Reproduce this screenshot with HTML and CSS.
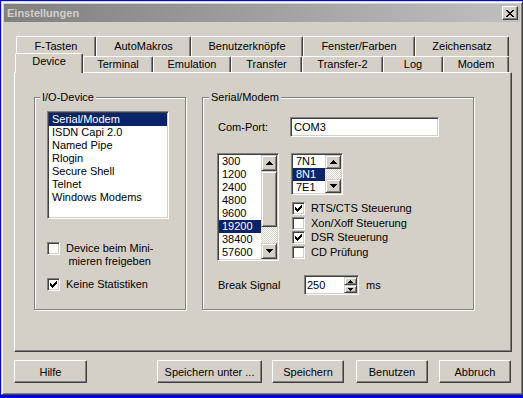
FILE: index.html
```html
<!DOCTYPE html>
<html lang="de">
<head>
  <meta charset="UTF-8">
  <title>Einstellungen</title>
  <link rel="stylesheet" href="styles.css">
</head>
<body>
  <div class="window">
    <div class="titlebar">
      <span class="title">Einstellungen</span>
      <span class="close">
        <svg width="8" height="7" viewBox="0 0 8 7"><path d="M0 0h2v1h-2zM6 0h2v1h-2zM1 1h2v1h-2zM5 1h2v1h-2zM2 2h4v1h-4zM3 3h2v1h-2zM2 4h4v1h-4zM1 5h2v1h-2zM5 5h2v1h-2zM0 6h2v1h-2zM6 6h2v1h-2z"/></svg>
      </span>
    </div>

    <div class="client">
      <div class="tabrow back">
        <div class="tab t-ftasten">F-Tasten</div>
        <div class="tab t-makros">AutoMakros</div>
        <div class="tab t-knoepfe">Benutzerknöpfe</div>
        <div class="tab t-fenster">Fenster/Farben</div>
        <div class="tab t-zeichen">Zeichensatz</div>
      </div>
      <div class="tabrow front">
        <div class="tab t-device active">Device</div>
        <div class="tab t-terminal">Terminal</div>
        <div class="tab t-emulation">Emulation</div>
        <div class="tab t-transfer">Transfer</div>
        <div class="tab t-transfer2">Transfer-2</div>
        <div class="tab t-log">Log</div>
        <div class="tab t-modem">Modem</div>
      </div>

      <div class="panel">
        <fieldset class="group io">
          <legend>I/O-Device</legend>
          <div class="list io-list">
            <ul class="items">
              <li class="sel">Serial/Modem</li>
              <li>ISDN Capi 2.0</li>
              <li>Named Pipe</li>
              <li>Rlogin</li>
              <li>Secure Shell</li>
              <li>Telnet</li>
              <li>Windows Modems</li>
            </ul>
          </div>
          <div class="check-row first">
            <span class="box"></span>
            <span class="check-text center">Device beim Mini-<br>mieren freigeben</span>
          </div>
          <div class="check-row second">
            <span class="box on"><svg width="7" height="7" viewBox="0 0 7 7"><path d="M6 0h1v1h-1zM5 1h2v1h-2zM0 2h1v1h-1zM4 2h3v1h-3zM0 3h2v1h-2zM3 3h3v1h-3zM0 4h5v1h-5zM1 5h3v1h-3zM2 6h1v1h-1z"/></svg></span>
            <span class="check-text">Keine Statistiken</span>
          </div>
        </fieldset>

        <fieldset class="group serial">
          <legend>Serial/Modem</legend>
          <div class="com-row">
            <span class="com-label">Com-Port:</span>
            <div class="edit com-edit">COM3</div>
          </div>

          <div class="lists-row">
            <div class="list baud-list">
              <ul class="items">
                <li>300</li>
                <li>1200</li>
                <li>2400</li>
                <li>4800</li>
                <li>9600</li>
                <li class="sel">19200</li>
                <li>38400</li>
                <li>57600</li>
              </ul>
              <div class="scrollbar">
                <span class="sbtn"><svg width="7" height="4" viewBox="0 0 7 4"><path d="M3 0h1v1h1v1h1v1h1v1H0V3h1V2h1V1h1z"/></svg></span>
                <span class="thumb"></span>
                <span class="track"></span>
                <span class="sbtn"><svg width="7" height="4" viewBox="0 0 7 4"><path d="M0 0h7v1H6v1H5v1H4v1H3V3H2V2H1V1H0z"/></svg></span>
              </div>
            </div>

            <div class="parity-col">
              <div class="list parity-list">
                <ul class="items">
                  <li>7N1</li>
                  <li class="sel">8N1</li>
                  <li>7E1</li>
                </ul>
                <div class="scrollbar">
                  <span class="sbtn small"><svg width="7" height="4" viewBox="0 0 7 4"><path d="M3 0h1v1h1v1h1v1h1v1H0V3h1V2h1V1h1z"/></svg></span>
                  <span class="track"></span>
                  <span class="sbtn small"><svg width="7" height="4" viewBox="0 0 7 4"><path d="M0 0h7v1H6v1H5v1H4v1H3V3H2V2H1V1H0z"/></svg></span>
                </div>
              </div>

              <div class="opts">
                <div class="check-row">
                  <span class="box on"><svg width="7" height="7" viewBox="0 0 7 7"><path d="M6 0h1v1h-1zM5 1h2v1h-2zM0 2h1v1h-1zM4 2h3v1h-3zM0 3h2v1h-2zM3 3h3v1h-3zM0 4h5v1h-5zM1 5h3v1h-3zM2 6h1v1h-1z"/></svg></span>
                  <span class="check-text">RTS/CTS Steuerung</span>
                </div>
                <div class="check-row">
                  <span class="box"></span>
                  <span class="check-text">Xon/Xoff Steuerung</span>
                </div>
                <div class="check-row">
                  <span class="box on"><svg width="7" height="7" viewBox="0 0 7 7"><path d="M6 0h1v1h-1zM5 1h2v1h-2zM0 2h1v1h-1zM4 2h3v1h-3zM0 3h2v1h-2zM3 3h3v1h-3zM0 4h5v1h-5zM1 5h3v1h-3zM2 6h1v1h-1z"/></svg></span>
                  <span class="check-text">DSR Steuerung</span>
                </div>
                <div class="check-row">
                  <span class="box"></span>
                  <span class="check-text">CD Prüfung</span>
                </div>
              </div>
            </div>
          </div>

          <div class="break-row">
            <span class="break-label">Break Signal</span>
            <div class="spin">
              <span class="spin-val">250</span>
              <span class="spin-btns">
                <span class="spin-btn"><svg width="5" height="3" viewBox="0 0 5 3"><path d="M2 0h1v1h1v1h1v1H0V2h1V1h1z"/></svg></span>
                <span class="spin-btn"><svg width="5" height="3" viewBox="0 0 5 3"><path d="M0 0h5v1H4v1H3v1H2V2H1V1H0z"/></svg></span>
              </span>
            </div>
            <span class="unit">ms</span>
          </div>
        </fieldset>
      </div>

      <div class="buttons">
        <button class="btn b-hilfe">Hilfe</button>
        <button class="btn b-unter">Speichern unter ...</button>
        <button class="btn b-save">Speichern</button>
        <button class="btn b-use">Benutzen</button>
        <button class="btn b-cancel">Abbruch</button>
      </div>
    </div>
  </div>
</body>
</html>
```

FILE: styles.css
```css
* {
  box-sizing: border-box;
}
body {
  margin: 0;
  padding: 1px 0 0 1px;
  background: #0000ee;
  font-family: "Liberation Sans", Arial, sans-serif;
  font-size: 11px;
  color: #000;
  overflow: hidden;
}
.window {
  width: 522px;
  height: 394px;
  padding: 2px;
  background: #d4d0c8;
  border: 1px solid;
  border-color: #d4d0c8 #404040 #404040 #d4d0c8;
  box-shadow: inset 1px 1px #fff, inset -1px -1px #808080;
}

/* title bar (inactive) */
.titlebar {
  height: 18px;
  display: flex;
  align-items: center;
  justify-content: space-between;
  padding: 0 2px 0 3px;
  background: linear-gradient(to right, #808080, #c0c0c0);
}
.title {
  font-weight: bold;
  color: #d4d0c8;
}
.close {
  width: 16px;
  height: 14px;
  display: flex;
  align-items: center;
  justify-content: center;
  background: #d4d0c8;
  border: 1px solid;
  border-color: #fff #404040 #404040 #fff;
  box-shadow: inset -1px -1px #808080;
}
.close svg {
  display: block;
}

.client {
  padding: 14px 8px 0 10px;
}

/* tabs */
.tabrow {
  display: flex;
}
.back {
  height: 20px;
  padding-left: 2px;
}
.front {
  height: 19px;
  margin-top: -3px;
  padding-left: 1px;
  align-items: flex-end;
}
.tab {
  position: relative;
  height: 100%;
  line-height: 13px;
  padding-top: 3px;
  text-align: center;
  white-space: nowrap;
  background: #d4d0c8;
  border: 1px solid;
  border-bottom: 0;
  border-color: #fff #404040 #404040 #fff;
  border-radius: 2px 2px 0 0;
  box-shadow: inset -1px 0 #808080;
}
.front .tab {
  height: 16px;
  padding-top: 1px;
}
.front .tab.active {
  height: 20px;
  margin-bottom: -1px;
  padding-top: 1px;
  z-index: 2;
}
.t-ftasten { width: 80px; }
.t-makros { width: 95px; }
.t-knoepfe { width: 112px; }
.t-fenster { width: 112px; }
.t-zeichen { width: 94px; }
.t-device { width: 68px; }
.t-terminal { width: 70px; }
.t-emulation { width: 78px; }
.t-transfer { width: 71px; }
.t-transfer2 { width: 81px; }
.t-log { width: 60px; }
.t-modem { width: 66px; }

/* tab page */
.panel {
  position: relative;
  z-index: 1;
  width: 498px;
  height: 280px;
  display: flex;
  align-items: flex-start;
  padding: 18px 0 0 19px;
  border: 1px solid;
  border-color: #fff #404040 #404040 #fff;
  box-shadow: inset -1px -1px #808080;
}
.group {
  margin: 0;
  min-width: 0;
  height: 219px;
  border: 1px solid #808080;
  box-shadow: inset 1px 1px #fff, 1px 1px #fff;
}
.group legend {
  padding: 0 2px;
  line-height: 13px;
  background: #d4d0c8;
}
.io {
  width: 152px;
  padding: 7px 0 0 5px;
}
.serial {
  width: 272px;
  margin-left: 16px;
  padding: 13px 0 0 6px;
}

/* sunken controls */
.list,
.edit,
.spin {
  background: #fff;
  border: 1px solid;
  border-color: #808080 #fff #fff #808080;
  box-shadow: inset 1px 1px #404040, inset -1px -1px #d4d0c8;
  padding: 1px;
}
.list {
  display: flex;
}
.items {
  flex: 1;
  margin: 0;
  padding: 0;
  list-style: none;
}
.items li {
  height: 13px;
  line-height: 13px;
  padding-left: 3px;
  white-space: nowrap;
}
.items li.sel {
  background: #0a246a;
  color: #fff;
}
.io-list {
  width: 122px;
  height: 108px;
  margin-left: 7px;
}

.scrollbar {
  width: 16px;
  display: flex;
  flex-direction: column;
}
.sbtn,
.thumb,
.spin-btn {
  display: flex;
  align-items: center;
  justify-content: center;
  background: #d4d0c8;
  border: 1px solid;
  border-color: #d4d0c8 #404040 #404040 #d4d0c8;
  box-shadow: inset 1px 1px #fff, inset -1px -1px #808080;
}
.sbtn {
  height: 16px;
  flex: none;
}
.sbtn.small {
  height: 14px;
}
.thumb {
  height: 56px;
  flex: none;
}
.track {
  flex: 1;
  background: repeating-conic-gradient(#fff 0 25%, #d4d0c8 0 50%) 0 0 / 2px 2px;
}
.sbtn svg,
.spin-btn svg {
  display: block;
}

/* checkboxes */
.check-row {
  display: flex;
  align-items: flex-start;
}
.box {
  width: 13px;
  height: 13px;
  flex: none;
  background: #fff;
  border: 1px solid;
  border-color: #808080 #fff #fff #808080;
  box-shadow: inset 1px 1px #404040, inset -1px -1px #d4d0c8;
  padding: 2px;
}
.box svg {
  display: block;
}
.check-text {
  margin-left: 6px;
  line-height: 13px;
  white-space: nowrap;
}
.check-text.center {
  text-align: center;
}
.io .check-row {
  margin-left: 7px;
}
.io .first {
  margin-top: 23px;
}
.io .second {
  margin-top: 10px;
}

/* serial / modem */
.com-row {
  display: flex;
  align-items: center;
  margin-left: 9px;
}
.com-label {
  width: 72px;
}
.edit {
  height: 20px;
  line-height: 16px;
  padding-left: 3px;
}
.com-edit {
  width: 149px;
}
.lists-row {
  display: flex;
  align-items: flex-start;
  margin: 16px 0 0 8px;
}
.baud-list {
  width: 62px;
  height: 108px;
}
.parity-col {
  margin-left: 12px;
}
.parity-list {
  width: 52px;
  height: 42px;
}
.opts {
  margin: 7px 0 0 1px;
}
.opts .check-row {
  height: 14.5px;
}
.break-row {
  display: flex;
  align-items: center;
  margin: 14px 0 0 9px;
}
.break-label {
  width: 86px;
}
.spin {
  width: 55px;
  height: 20px;
  display: flex;
}
.spin-val {
  flex: 1;
  line-height: 16px;
  padding-left: 1px;
}
.spin-btns {
  width: 13px;
  display: flex;
  flex-direction: column;
}
.spin-btn {
  flex: 1;
}
.unit {
  margin-left: 7px;
}

/* dialog buttons */
.buttons {
  display: flex;
  margin-top: 8px;
}
.btn {
  height: 23px;
  width: 72px;
  padding: 0;
  font: inherit;
  color: #000;
  background: #d4d0c8;
  border: 1px solid;
  border-color: #fff #404040 #404040 #fff;
  box-shadow: inset -1px -1px #808080;
  border-radius: 0;
}
.b-hilfe { width: 73px; }
.b-unter { width: 105px; margin-left: 70px; }
.b-save { margin-left: 10px; }
.b-use { margin-left: 12px; }
.b-cancel { margin-left: 11px; }
```
